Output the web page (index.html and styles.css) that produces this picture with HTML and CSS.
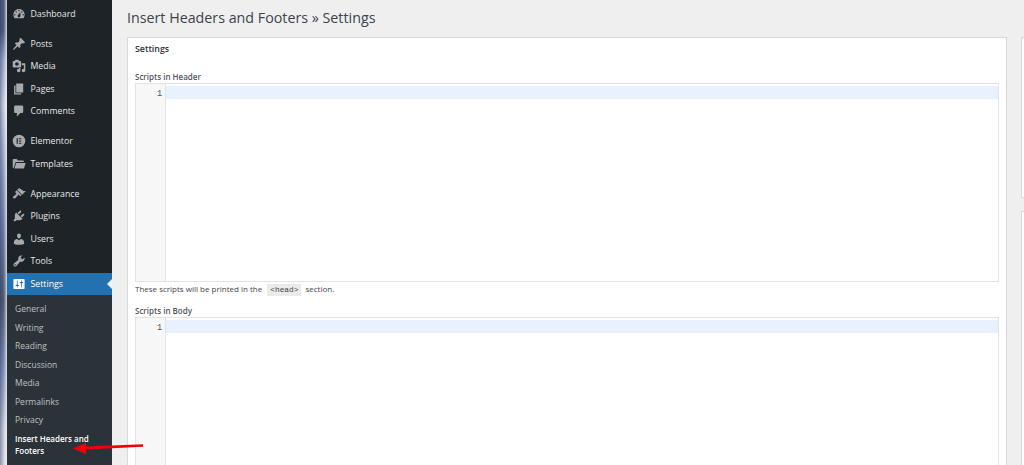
FILE: index.html
```html
<!DOCTYPE html>
<html lang="en">
<head>
<meta charset="utf-8">
<title>Insert Headers and Footers</title>
<link rel="stylesheet" href="styles.css">
</head>
<body>
<div class="desktop-strip"></div>
<nav class="sidebar">
  <ul class="menu">
    <li class="item"><svg class="icon" viewBox="0 0 20 20"><path fill-rule="evenodd" d="M3.76 16h12.48c1.1-1.37 1.76-3.11 1.76-5 0-4.42-3.58-8-8-8s-8 3.58-8 8c0 1.89.66 3.63 1.76 5zM10 4c.55 0 1 .45 1 1s-.45 1-1 1-1-.45-1-1 .45-1 1-1zM6 6c.55 0 1 .45 1 1s-.45 1-1 1-1-.45-1-1 .45-1 1-1zm8 0c.55 0 1 .45 1 1s-.45 1-1 1-1-.45-1-1 .45-1 1-1zm-5.37 5.55L12 7v6c0 1.1-.9 2-2 2s-2-.9-2-2c0-.57.24-1.08.63-1.45zM4 10c.55 0 1 .45 1 1s-.45 1-1 1-1-.45-1-1 .45-1 1-1zm12 0c.55 0 1 .45 1 1s-.45 1-1 1-1-.45-1-1 .45-1 1-1z"/></svg>Dashboard</li>
    <li class="item group-start"><svg class="icon" viewBox="0 0 20 20"><path d="M10.44 3.02l1.82-1.82 6.36 6.35-1.83 1.82c-1.05-.68-2.48-.57-3.41.36l-.75.75c-.92.93-1.04 2.35-.35 3.41l-1.83 1.82-2.41-2.41-2.8 2.79c-.42.42-3.38 2.71-3.8 2.29s1.86-3.39 2.28-3.81l2.79-2.79L4.1 9.36l1.83-1.82c1.05.69 2.48.57 3.4-.36l.75-.75c.93-.92 1.05-2.35.36-3.41z"/></svg>Posts</li>
    <li class="item"><svg class="icon" viewBox="0 0 20 20"><path fill-rule="evenodd" d="M13 11V4c0-.55-.45-1-1-1h-1.67L9 1H5L3.67 3H2c-.55 0-1 .45-1 1v7c0 .55.45 1 1 1h10c.55 0 1-.45 1-1zM7 4.5c1.38 0 2.5 1.12 2.5 2.5S8.38 9.5 7 9.5 4.5 8.38 4.5 7 5.62 4.5 7 4.5zM14 6h5v10.5c0 1.38-1.12 2.5-2.5 2.5S14 17.88 14 16.5s1.12-2.5 2.5-2.5c.17 0 .34.02.5.05V9h-3V6zm-4 8.05V13h2v3.5c0 1.38-1.12 2.5-2.5 2.5S7 17.88 7 16.5 8.12 14 9.5 14c.17 0 .34.02.5.05z"/></svg>Media</li>
    <li class="item"><svg class="icon" viewBox="0 0 20 20"><path d="M6 15V2h10v13H6zm-1 1h8v2H3V5h2v11z"/></svg>Pages</li>
    <li class="item"><svg class="icon" viewBox="0 0 20 20"><path d="M5 2h9c1.1 0 2 .9 2 2v7c0 1.1-.9 2-2 2h-2l-5 5v-5H5c-1.1 0-2-.9-2-2V4c0-1.1.9-2 2-2z"/></svg>Comments</li>
    <li class="item group-start"><svg class="icon" viewBox="0 0 20 20"><path fill-rule="evenodd" d="M10 1a9 9 0 1 0 0 18 9 9 0 0 0 0-18zM6.6 6h1.7v8H6.6V6zm3.2 0h3.6v1.6H9.8V6zm0 3.2h3.6v1.6H9.8V9.2zm0 3.2h3.6V14H9.8v-1.6z"/></svg>Elementor</li>
    <li class="item"><svg class="icon" viewBox="0 0 20 20"><path d="M1 4.5C1 3.7 1.7 3 2.500 3h4.300l1.700 2h7c.8 0 1.500.7 1.500 1.500V7H5.200L2.400 16H2.300C1.600 16 1 15.400 1 14.700V4.500zM5.900 8.500H19.500L17 16.500H3.500L5.900 8.500z"/></svg>Templates</li>
    <li class="item group-start"><svg class="icon" viewBox="0 0 20 20"><path d="M14.48 11.06L7.41 3.99l1.5-1.5c.5-.56 2.3-.47 3.51.32 1.21.8 1.43 1.28 2.91 2.1 1.18.64 2.45 1.26 4.45.85zm-.71.71L6.7 4.7 4.930 6.470c-.39.39-.39 1.020 0 1.410l1.060 1.060c.39.39.39 1.030 0 1.420-.6.6-1.430 1.110-2.210 1.690-.35.26-.7.53-1.010.84C1.430 13.710.96 15.120 1.390 15.880l.56-.56.71.71-.56.56c.76.43 2.170-.04 3.990-1.860.31-.31.58-.66.84-1.010.58-.78 1.090-1.610 1.690-2.210.39-.39 1.030-.39 1.420 0l1.060 1.060c.39.39 1.020.39 1.410 0z"/></svg>Appearance</li>
    <li class="item"><svg class="icon" viewBox="0 0 20 20"><path d="M13.11 4.36L9.87 7.6 8 5.730l3.240-3.240c.35-.34 1.050-.2 1.560.32.52.51.66 1.210.31 1.550zm-8 1.770l.91-1.120 9.010 9.010-1.190.84c-.71.71-2.630 1.160-3.820 1.160H6.140L4.900 17.260c-.59.59-1.540.59-2.120 0-.59-.58-.59-1.530 0-2.120l1.240-1.240v-3.880c0-1.130.4-3.190 1.090-3.890zm7.260 3.970l3.240-3.240c.34-.35 1.040-.21 1.550.31.52.51.66 1.210.31 1.550l-3.240 3.250z"/></svg>Plugins</li>
    <li class="item"><svg class="icon" viewBox="0 0 20 20"><path d="M10 9.250c-2.270 0-2.730-3.440-2.730-3.440C7 4.020 7.820 2 9.970 2c2.160 0 2.980 2.020 2.710 3.810 0 0-.41 3.440-2.680 3.440zm0 2.570L12.720 10c2.390 0 4.520 2.330 4.520 4.530v2.490s-3.650 1.130-7.240 1.130c-3.650 0-7.240-1.130-7.240-1.130v-2.490c0-2.250 1.940-4.480 4.470-4.480z"/></svg>Users</li>
    <li class="item"><svg class="icon" viewBox="0 0 20 20"><path fill-rule="evenodd" d="M16.680 9.770c-1.340 1.340-3.300 1.670-4.950.99l-5.410 6.520c-.99.99-2.590.99-3.580 0s-.99-2.590 0-3.570l6.520-5.420c-.68-1.650-.35-3.610.99-4.950 1.280-1.280 3.120-1.620 4.720-1.060l-2.890 2.890 2.820 2.820 2.860-2.870c.53 1.580.18 3.390-1.080 4.650zM3.810 16.210c.4.39 1.040.39 1.430 0 .4-.4.4-1.040 0-1.430-.39-.4-1.030-.4-1.430 0-.39.39-.39 1.030 0 1.430z"/></svg>Tools</li>
    <li class="item current"><svg class="icon" viewBox="0 0 20 20"><path fill-rule="evenodd" d="M18 16V4c0-.55-.45-1-1-1H3c-.55 0-1 .45-1 1v12c0 .55.45 1 1 1h14c.55 0 1-.45 1-1zM8 11h1c.55 0 1 .45 1 1s-.45 1-1 1H8v1.500c0 .28-.22.5-.5.5s-.5-.22-.5-.5V13H6c-.55 0-1-.45-1-1s.45-1 1-1h1V5.500c0-.28.22-.5.5-.5s.5.22.5.5V11zm5-2h-1c-.55 0-1-.45-1-1s.45-1 1-1h1V5.500c0-.28.22-.5.5-.5s.5.22.5.5V7h1c.55 0 1 .45 1 1s-.45 1-1 1h-1v5.500c0 .28-.22.5-.5.5s-.5-.22-.5-.5V9z"/></svg>Settings</li>
  </ul>
  <ul class="submenu">
    <li>General</li>
    <li>Writing</li>
    <li>Reading</li>
    <li>Discussion</li>
    <li>Media</li>
    <li>Permalinks</li>
    <li>Privacy</li>
    <li class="sub-current">Insert Headers and Footers</li>
  </ul>
</nav>
<main class="main">
  <h1 class="title">Insert Headers and Footers » Settings</h1>
  <div class="columns">
    <section class="card">
      <h2 class="card-title">Settings</h2>
      <h3 class="field-label first">Scripts in Header</h3>
      <div class="editor">
        <div class="gutter">1</div>
        <div class="code"><div class="active-line"></div></div>
      </div>
      <p class="help">These scripts will be printed in the <code class="tag">&lt;head&gt;</code> section.</p>
      <h3 class="field-label">Scripts in Body</h3>
      <div class="editor">
        <div class="gutter">1</div>
        <div class="code"><div class="active-line"></div></div>
      </div>
    </section>
    <aside class="side">
      <div class="panel panel-one"></div>
      <div class="panel panel-two"></div>
    </aside>
  </div>
</main>
<svg class="arrow" viewBox="0 0 72 18" aria-hidden="true"><path d="M1 10.500L14 5 14 8.500 71 6.200 71 8.800 14 11.400 14 16z" fill="#f4000a"/></svg>
</body>
</html>
```
FILE: styles.css
```css
* { box-sizing: border-box; }
html, body { margin: 0; height: 465px; overflow: hidden; }
body {
  display: flex;
  position: relative;
  background: #efefef;
  font-family: "Open Sans", "Liberation Sans", sans-serif;
  color: #3c434a;
}
ul { list-style: none; margin: 0; padding: 0; }

.desktop-strip {
  flex: 0 0 7px;
  height: 465px;
  background:
    linear-gradient(90deg, rgba(70,85,125,.6) 0, rgba(150,160,190,.35) 55%, rgba(240,242,246,.85) 100%),
    linear-gradient(180deg, #2b3a5e 0, #2b3a5e 30px, #9fb0cf 60px, #e8ebf2 105px, #8a9cc0 180px, #5a6f9a 230px, #2f3448 300px, #6c7da8 360px, #aab4ca 400px, #e6e6e6 430px, #f0f0f0 465px);
}

.sidebar {
  flex: 0 0 105px;
  height: 465px;
  background: #1d2327;
  font-size: 8.750px;
  color: #f0f0f1;
}
.menu { padding-top: 2.800px; }
.item {
  display: flex;
  align-items: center;
  gap: 4.500px;
  height: 22.500px;
  padding-left: 5px;
  color: #e6e8ea;
}
.group-start { margin-top: 7.450px; }
.icon { width: 14px; height: 14px; flex: none; fill: #a7aaad; }
.current {
  position: relative;
  background: #2271b1;
  color: #fff;
}
.current .icon { fill: #fff; }
.current::after {
  content: "";
  position: absolute;
  right: 0;
  top: 6.500px;
  border: 5px solid transparent;
  border-right-color: #f0f0f1;
  border-left-width: 0;
}
.submenu {
  background: #2c3338;
  padding: 4.800px 0 14px 8px;
  font-size: 8.500px;
  color: #bcc0c4;
}
.submenu li { height: 18.600px; line-height: 18.600px; }
.submenu .sub-current {
  height: auto;
  line-height: 12px;
  padding-top: 3px;
  font-size: 8px;
  font-weight: 600;
  color: #fff;
}

.main { flex: 1; min-width: 0; padding-left: 15px; }
.title {
  margin: 0;
  height: 37px;
  padding-top: 7px;
  font-size: 14.270px;
  line-height: 22px;
  font-weight: 400;
  color: #3c434a;
}
.columns { display: flex; gap: 14px; }
.card {
  flex: 0 0 880px;
  height: 500px;
  background: #fff;
  border: 1px solid #d8d8d8;
  padding: 5px 7px 0;
}
.card-title {
  margin: 0;
  font-size: 8.800px;
  line-height: 12px;
  font-weight: 600;
  color: #2c3338;
}
.field-label {
  margin: 0;
  font-size: 8px;
  line-height: 12px;
  font-weight: 600;
  color: #50575e;
}
.field-label.first { margin-top: 16px; }
.editor {
  display: flex;
  height: 199px;
  border: 1px solid #e3e3e3;
}
.gutter {
  flex: 0 0 30px;
  background: #f7f7f7;
  border-right: 1px solid #e3e3e3;
  padding: 4px 3px 0 0;
  text-align: right;
  font-family: "Liberation Mono", monospace;
  font-size: 8.500px;
  line-height: 13px;
  color: #555;
}
.code { flex: 1; padding-top: 2px; }
.active-line { height: 13px; background: #e8f2fe; }
.help {
  margin: 0 0 9px;
  padding-top: 1px;
  font-size: 8px;
  line-height: 12px;
  color: #444;
}
.tag {
  display: inline-block;
  margin: 0 2px 0 3px;
  padding: 0 3px;
  background: #ebebeb;
  font-family: "Liberation Mono", monospace;
  font-size: 7.800px;
  line-height: 12px;
}
.side { flex: 0 0 100px; }
.panel { background: #fff; border: 1px solid #d8d8d8; }
.panel-one { height: 161px; margin-bottom: 13px; }
.panel-two { height: 300px; }

.arrow {
  position: absolute;
  left: 72px;
  top: 438px;
  width: 72px;
  height: 18px;
  overflow: visible;
}
```
